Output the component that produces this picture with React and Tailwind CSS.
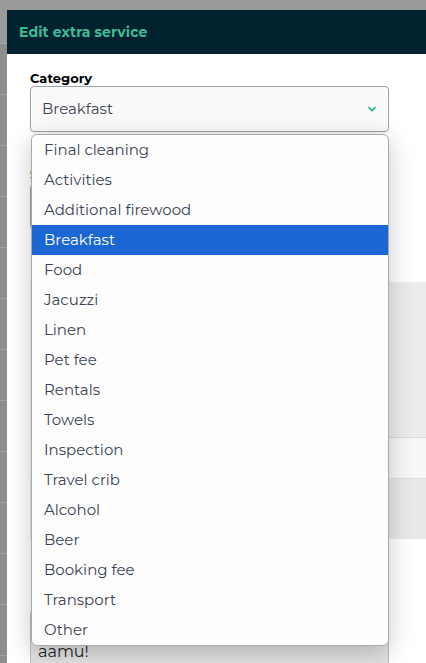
import { useState } from "react"

const categories = [
  "Final cleaning",
  "Activities",
  "Additional firewood",
  "Breakfast",
  "Food",
  "Jacuzzi",
  "Linen",
  "Pet fee",
  "Rentals",
  "Towels",
  "Inspection",
  "Travel crib",
  "Alcohol",
  "Beer",
  "Booking fee",
  "Transport",
  "Other",
]

const font = { fontFamily: "Montserrat, Inter, 'Noto Sans', sans-serif" }

const App = () => {
  const [selected, setSelected] = useState("Breakfast")

  return (
    <div className="relative w-[426px] h-[663px] overflow-hidden bg-[#8e8e8e]" style={font}>
      {/* page behind the overlay */}
      <div className="h-[44px] bg-[#9a9a9a] border-b border-[#a8a8a8]" />
      {Array(12)
        .fill()
        .map((_, i) => (
          <div key={i} className="h-[51px] border-b border-[#a3a3a3]" />
        ))}

      {/* modal */}
      <div className="absolute left-[7px] top-[10px] w-[440px] h-[680px] bg-white">
        <div className="h-[44px] bg-[#00222f] flex items-center px-[12px]">
          <h2 className="text-[14px] font-bold text-[#3cbd96] tracking-[0.1px]">Edit extra service</h2>
        </div>

        <div className="pl-[23px] pt-[16px]">
          <label className="block text-[13px] font-bold text-black leading-[16px]">Category</label>
          <div className="w-[359px] h-[46px] rounded-[4px] border border-[#9ea2aa] bg-[#fafafa] flex items-center justify-between pl-[11px] pr-[10px] shadow-[0_1px_2px_rgba(0,0,0,0.08)]">
            <span className="text-[15px] text-[#3d4452]">{selected}</span>
            <svg width="10" height="6" viewBox="0 0 10 6" className="mr-[1px]">
              <path d="M1.5 1.2 L5 4.6 L8.5 1.2" fill="none" stroke="#2bb592" strokeWidth="1.8" />
            </svg>
          </div>

          <label className="block mt-[34px] text-[13px] font-bold text-black leading-[16px]">Service name</label>
          <div className="mt-[2px] w-[359px] h-[46px] rounded-[4px] border border-[#9ea2aa] bg-[#fafafa]" />

          <div className="mt-[52px] h-[156px] bg-[#ececec] border-b border-[#d9d9d9]" />
          <div className="h-[41px] bg-[#f7f7f7] border-b border-[#dedede]" />
          <div className="h-[60px] bg-[#e9e9e9]" />

          <div className="mt-[71px] w-[359px] h-[90px] rounded-[4px] border border-[#bdbdbd] bg-[#e2e2e2] px-[7px] pt-[31px]">
            <span className="block text-[16px] leading-[20px] text-[#222]">aamu!</span>
          </div>
        </div>
      </div>

      {/* open dropdown */}
      <ul className="absolute left-[31px] top-[134px] w-[358px] rounded-[6px] border border-[#a7a9ae] bg-[#fdfdfd] shadow-[0_6px_24px_rgba(0,0,0,0.22)]">
        {categories.map((c) => (
          <li
            key={c}
            onClick={() => setSelected(c)}
            className={`h-[30px] flex items-center pl-[12px] text-[15px] ${
              c === selected ? "bg-[#1a67d3] text-white" : "text-[#3b4354]"
            }`}
          >
            {c}
          </li>
        ))}
      </ul>
    </div>
  )
}

export default App
